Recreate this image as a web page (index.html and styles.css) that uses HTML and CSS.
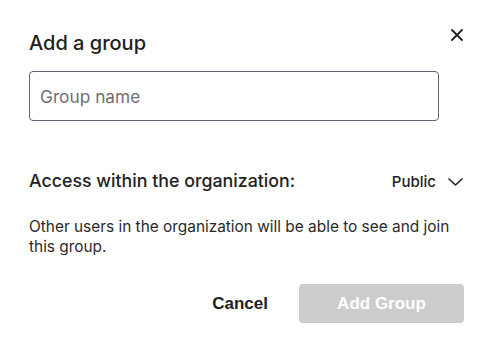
FILE: index.html
```html
<!DOCTYPE html>
<html>
<head>
<meta charset="utf-8">
<link rel="stylesheet" href="styles.css">
</head>
<body>
<div class="dialog">
  <div class="header">
    <h2 class="title">Add a group</h2>
    <button class="close" aria-label="Close">
      <svg width="12" height="12" viewBox="0 0 12 12"><path d="M1 1L11 11M11 1L1 11" stroke="#222" stroke-width="1.8" stroke-linecap="round"/></svg>
    </button>
  </div>
  <input class="name-input" type="text" placeholder="Group name">
  <div class="access">
    <span class="access-label">Access within the organization:</span>
    <span class="select">Public
      <svg class="chev" width="15" height="8" viewBox="0 0 15 8"><path d="M1 1L7.5 7L14 1" fill="none" stroke="#222" stroke-width="1.6" stroke-linecap="round" stroke-linejoin="round"/></svg>
    </span>
  </div>
  <p class="desc">Other users in the organization will be able to see and join this group.</p>
  <div class="footer">
    <button class="btn-cancel">Cancel</button>
    <button class="btn-add" disabled>Add Group</button>
  </div>
</div>
</body>
</html>
```
FILE: styles.css
```css
html, body {
  margin: 0;
  background: #ffffff;
}
.dialog {
  font-family: Inter, "Noto Sans", sans-serif;
  color: #222222;
  padding: 31px 20px 0 29px;
}
.header {
  display: flex;
  justify-content: space-between;
  align-items: flex-start;
}
.title {
  margin: 0;
  font-size: 20px;
  font-weight: 500;
  line-height: 24px;
  color: #1e1e1e;
}
.close {
  border: 0;
  background: none;
  padding: 0;
  margin: -2px 1px 0 0;
  width: 12px;
  height: 12px;
  display: flex;
}
.name-input {
  display: block;
  box-sizing: border-box;
  width: calc(100% - 25px);
  height: 50px;
  margin: 16px 0 0 0;
  border: 1px solid #5d6872;
  border-radius: 4px;
  padding: 0 10px;
  font-family: Inter, "Noto Sans", sans-serif;
  font-size: 17.3px;
  color: #222;
  outline: none;
}
.name-input::placeholder {
  color: #6f6f6f;
}
.access {
  display: flex;
  justify-content: space-between;
  align-items: baseline;
  margin-top: 48px;
  line-height: 24px;
}
.access-label {
  font-size: 17.8px;
  font-weight: 500;
}
.select {
  font-size: 15px;
  font-weight: 500;
  display: flex;
  align-items: baseline;
  gap: 12px;
  margin-right: 1px;
}
.chev {
  align-self: center;
}
.desc {
  margin: 23px 0 0 0;
  font-size: 15.4px;
  line-height: 20px;
  color: #2a2a2a;
}
.footer {
  display: flex;
  justify-content: flex-end;
  align-items: center;
  gap: 31px;
  margin-top: 27px;
}
.btn-cancel {
  border: 0;
  background: none;
  padding: 0;
  font-family: "Liberation Sans", Arial, sans-serif;
  font-weight: 700;
  font-size: 17px;
  color: #222;
}
.btn-add {
  border: 0;
  width: 165px;
  height: 39px;
  border-radius: 4px;
  background: #cccccc;
  color: #ffffff;
  font-family: "Liberation Sans", Arial, sans-serif;
  font-weight: 700;
  font-size: 17px;
}
```
